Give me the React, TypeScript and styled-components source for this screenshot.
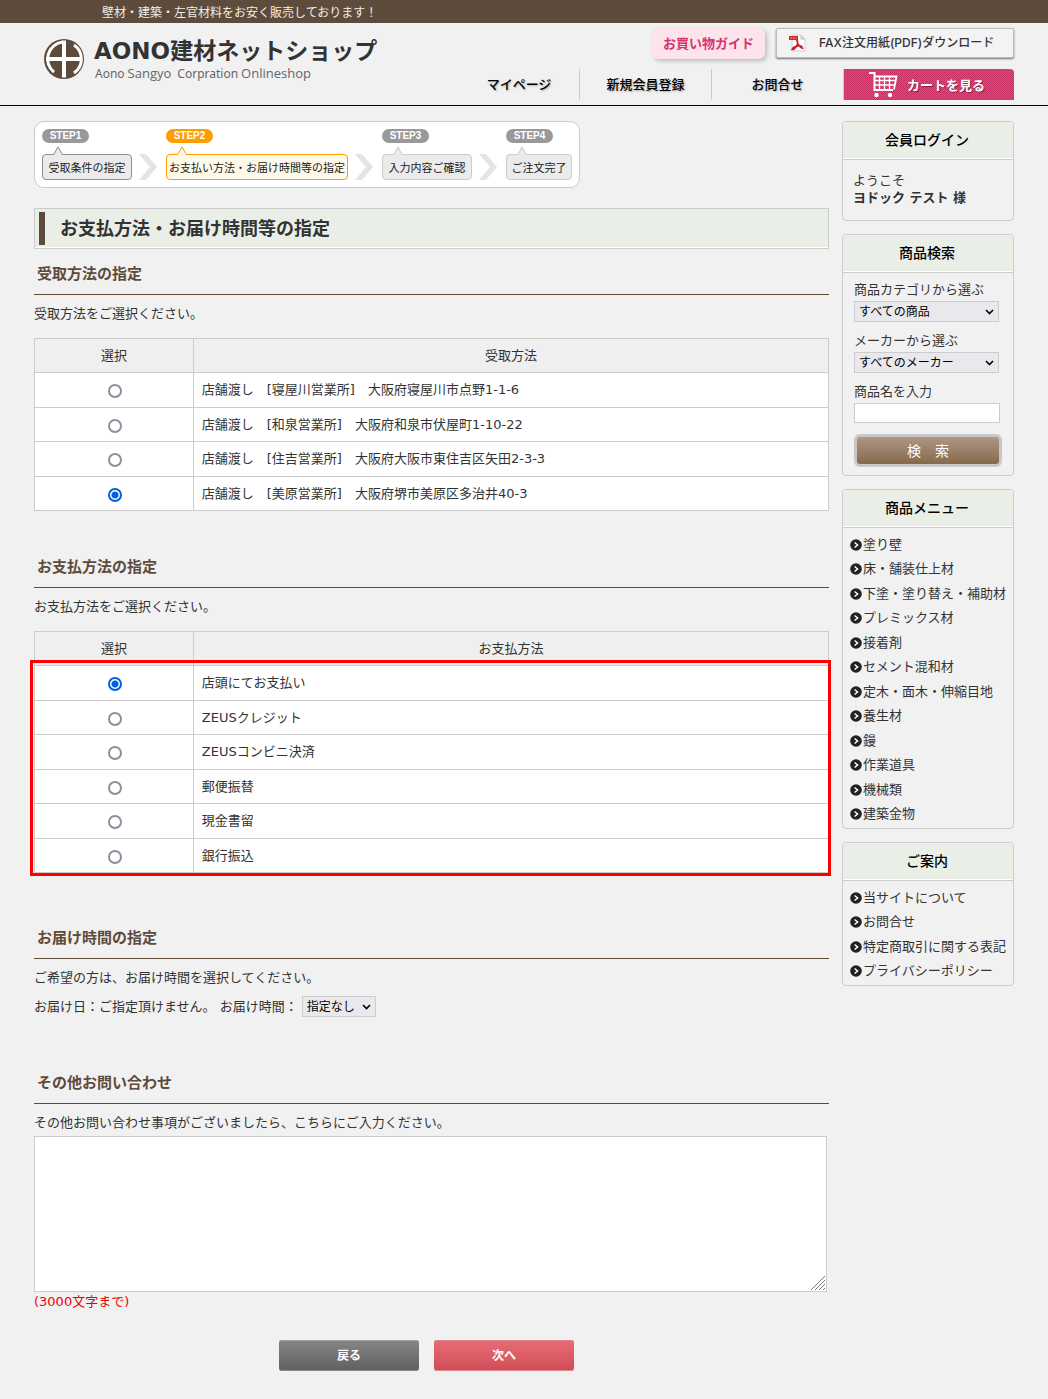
import React, { useState } from "react";
import styled, { createGlobalStyle, css } from "styled-components";

const jp = `"DejaVu Sans", "Noto Sans CJK JP", sans-serif`;
const jpSans = `"Noto Sans CJK JP", "Liberation Sans", sans-serif`;
const brown = "#5d4b3c";
const line = "#cccccc";

const GlobalStyle = createGlobalStyle`
  * { box-sizing: border-box; }
  body { margin: 0; background: #f1f1f1; color: #333333; font: 13px/20px ${jp}; }
  h1, h2, h3, p, ul { margin: 0; padding: 0; }
  ul { list-style: none; }
  a { color: inherit; text-decoration: none; }
  button, input, select, textarea { font-family: ${jpSans}; margin: 0; }
`;

const Container = styled.div`
  max-width: 980px;
  margin: 0 auto;
`;

/* ---------- header ---------- */

const TopBar = styled.div`
  background: ${brown};
  color: #f3ede0;
`;

const Tagline = styled.p`
  padding-left: 68px;
  font: 12px/23px ${jpSans};
`;

const Header = styled.header`
  border-bottom: 1px solid #000000;
`;

const HeaderInner = styled(Container)`
  display: flex;
  justify-content: space-between;
  padding: 5px 0;
`;

const Brand = styled.a`
  display: flex;
  align-items: flex-start;
  gap: 10px;
  padding: 11px 0 0 10px;
`;

const BrandText = styled.span`
  display: flex;
  flex-direction: column;
`;

const BrandName = styled.span`
  font: bold 23px/24px "DejaVu Sans", "Noto Sans CJK JP", sans-serif;
  color: #333333;
  white-space: nowrap;
`;

const BrandSub = styled.span`
  display: flex;
  align-items: baseline;
  gap: 3px;
  margin-left: 1px;
  font: 12px/20px "Noto Sans", "Open Sans", sans-serif;
  color: #666666;
`;

const Larger = styled.span`
  font-size: 13px;
  font-weight: 400;
  font-family: "Open Sans", "Noto Sans", sans-serif;
  margin-right: 3px;
`;

const HeaderSide = styled.div`
  display: flex;
  flex-direction: column;
  align-items: flex-end;
  gap: 10px;
`;

const Shortcuts = styled.div`
  display: flex;
  gap: 11px;
`;

const GuideLink = styled.a`
  width: 113px;
  height: 31px;
  border-radius: 6px;
  background: #fde4ec;
  box-shadow: 2px 2px 4px rgba(0, 0, 0, 0.22);
  color: #d6336c;
  font: bold 13px/30px ${jpSans};
  text-align: center;
`;

const FaxLink = styled.a`
  display: flex;
  align-items: center;
  gap: 12px;
  width: 238px;
  height: 30px;
  padding-left: 12px;
  border: 1px solid #bdbdbd;
  border-radius: 2px;
  background: #f3f3f3;
  box-shadow: 0 1px 2px rgba(0, 0, 0, 0.55);
  font: 500 12px/30px Inter, "Noto Sans CJK JP", sans-serif;
  white-space: nowrap;
`;

const Nav = styled.nav`
  display: flex;
`;

const NavLink = styled.a<{ $width: number }>`
  width: ${(p) => p.$width}px;
  border-right: 1px solid ${line};
  color: #000000;
  font: 500 13px/30px ${jpSans};
  text-align: center;
  text-shadow: 1px 1px 2px rgba(0, 0, 0, 0.3);
`;

const CartLink = styled.a`
  display: flex;
  align-items: center;
  justify-content: center;
  gap: 8px;
  width: 170px;
  height: 31px;
  padding-right: 4px;
  border-radius: 0 4px 0 0;
  background: repeating-conic-gradient(#c62e62 0% 25%, #cf5c5c 0% 50%) 0 0 / 2px 2px;
  color: #ffffff;
  font: bold 13px/31px ${jpSans};
  text-shadow: 1px 1px 1px rgba(60, 0, 20, 0.5);
`;

/* ---------- page frame ---------- */

const Page = styled(Container)`
  display: grid;
  grid-template-columns: minmax(0, 1fr) 172px;
  align-items: start;
  gap: 13px;
  padding: 15px 0 28px;
`;

const Side = styled.aside`
  display: flex;
  flex-direction: column;
  gap: 13px;
`;

/* ---------- steps ---------- */

const Steps = styled.ol`
  display: inline-flex;
  align-items: flex-end;
  margin: 0 0 20px;
  padding: 7px;
  list-style: none;
  vertical-align: top;
  background: #ffffff;
  border: 1px solid ${line};
  border-radius: 10px;
`;

type Tone = "done" | "active" | "todo";
const tones: Record<Tone, { edge: string; fill: string; pill: string }> = {
  done: { edge: "#8f8f8f", fill: "#ebebeb", pill: "#999999" },
  active: { edge: "#ff9c00", fill: "#fff9ea", pill: "#ff9c00" },
  todo: { edge: "#cccccc", fill: "#ebebeb", pill: "#999999" },
};

const StepItem = styled.li`
  display: flex;
  align-items: flex-end;
`;

const StepColumn = styled.div`
  display: flex;
  flex-direction: column;
  align-items: flex-start;
`;

const Pill = styled.span<{ $tone: Tone }>`
  width: 47px;
  border-radius: 7px;
  background: ${(p) => tones[p.$tone].pill};
  color: #ffffff;
  font: bold 10px/14px "Liberation Sans", sans-serif;
  text-align: center;
`;

const Pointer = styled.svg`
  display: block;
  position: relative;
  margin: 3px 0 -1px 11px;
`;

const StepBox = styled.span<{ $tone: Tone; $width: number }>`
  width: ${(p) => p.$width}px;
  border: 1px solid ${(p) => tones[p.$tone].edge};
  border-radius: 4px;
  background: ${(p) => tones[p.$tone].fill};
  font: 11px/24px ${jpSans};
  color: #222222;
  text-align: center;
  white-space: nowrap;
`;

const StepArrow = styled.svg`
  display: block;
  margin: 0 9px 0 7px;
`;

/* ---------- main column ---------- */

const PageTitle = styled.h1`
  display: flex;
  align-items: center;
  gap: 15px;
  height: 41px;
  padding-left: 4px;
  border: 1px solid ${line};
  background: #e9efe7;
  box-shadow: inset 0 -1px 0 #ffffff;
  font: bold 18px/33px ${jp};

  &::before {
    content: "";
    width: 6px;
    height: 33px;
    background: ${brown};
  }
`;

const Section = styled.section<{ $after: number }>`
  margin-bottom: ${(p) => p.$after}px;
`;

const SectionTitle = styled.h2`
  margin-bottom: 9px;
  padding: 15px 3px 10px;
  border-bottom: 1px solid ${brown};
  color: ${brown};
  font: bold 15px/20px ${jp};
`;

const TableFrame = styled.div`
  position: relative;
  margin-top: 14px;
`;

const Highlight = styled.div`
  position: absolute;
  top: 29px;
  right: -2px;
  bottom: -3px;
  left: -4px;
  border: 3px solid #ff0000;
  pointer-events: none;
`;

const ChoiceTable = styled.table`
  width: 100%;
  border-collapse: collapse;
  table-layout: fixed;
  line-height: 20px;

  th, td { border: 1px solid ${line}; padding: 0 8px; font-weight: normal; }
  th { background: #efefef; }
  th:first-child { width: 20%; }
  td { background: #ffffff; }
  td:first-child { text-align: center; }
  tr { height: 34px; }
  tbody tr:nth-child(odd) { height: 35px; }
`;

const Radio = styled.input`
  appearance: none;
  display: block;
  width: 14px;
  height: 14px;
  margin: 2px auto 0;
  border: 2px solid #8f8f9d;
  border-radius: 50%;
  background: #ffffff;
  transform: translateX(1px);

  &:checked {
    border-color: #0060df;
    background: radial-gradient(circle, #0060df 0 3px, #ffffff 4px);
  }
`;

const DeliveryRow = styled.div`
  display: flex;
  align-items: center;
  gap: 4px;
  margin-top: 8px;
`;

const SelectFrame = styled.span<{ $width: number }>`
  position: relative;
  display: block;
  width: ${(p) => p.$width}px;

  svg { position: absolute; top: 8px; right: 5px; pointer-events: none; }
`;

const SelectBox = styled.select`
  appearance: none;
  display: block;
  width: 100%;
  height: 21px;
  padding: 0 4px 1px;
  border: 1px solid ${line};
  border-radius: 0;
  background: #e9e9ed;
  color: #000000;
  font-size: 12px;
  line-height: 18px;
`;

const NoteFrame = styled.div`
  position: relative;
  margin: 3px 2px 0 0;

  svg { position: absolute; right: 2px; bottom: 2px; pointer-events: none; }
`;

const NoteArea = styled.textarea`
  display: block;
  width: 100%;
  height: 156px;
  border: 1px solid ${line};
  background: #ffffff;
  font-size: 13px;
  resize: none;
`;

const Limit = styled.p`
  color: #f00000;
`;

const Actions = styled.div`
  display: flex;
  justify-content: center;
  gap: 15px;
  padding-right: 10px;
`;

const ActionButton = styled.button<{ $primary?: boolean }>`
  width: 140px;
  height: 31px;
  padding: 0 0 2px;
  border: 0;
  border-radius: 3px;
  color: #ffffff;
  font-size: 12px;
  font-weight: bold;
  line-height: 28px;
  ${(p) =>
    p.$primary
      ? css`
          background: linear-gradient(#e86d76, #d04c57);
          box-shadow: inset 0 1px 0 #e3838b, inset 0 -1px 0 #de8a91;
        `
      : css`
          background: linear-gradient(#868686, #606060);
          box-shadow: inset 0 1px 0 #a0a0a0, inset 0 -1px 0 #8c8c8c;
        `}
`;

/* ---------- side column ---------- */

const Panel = styled.section`
  border: 1px solid ${line};
  border-radius: 4px;
  overflow: hidden;
`;

const PanelTitle = styled.h2`
  padding: 0 2px 3px 0;
  border-bottom: 1px solid ${line};
  background: #e9efe7;
  box-shadow: inset 0 -1px 0 #ffffff;
  color: #000000;
  font: 500 14px/34px ${jpSans};
  text-align: center;
`;

const Greeting = styled.p`
  padding: 12px 10px 14px;
  line-height: 17px;
`;

const SearchForm = styled.form`
  display: flex;
  flex-direction: column;
  gap: 9px;
  padding: 7px 11px 8px;
`;

const Field = styled.div`
  label { display: block; margin-bottom: 1px; }
`;

const TextBox = styled.input`
  display: block;
  width: 146px;
  height: 20px;
  border: 1px solid ${line};
  background: #ffffff;
`;

const SearchButton = styled.button`
  width: 148px;
  height: 33px;
  margin-top: 2px;
  padding: 0 0 2px;
  border: 3px solid #c8c8c8;
  border-radius: 6px;
  background: linear-gradient(#ad9784, #86694c);
  color: #ffffff;
  font-size: 14px;
  line-height: 24px;
`;

const MenuList = styled.ul`
  padding: 5px 6px 1px 7px;
`;

const MenuItem = styled.li`
  line-height: 24px;
  &:nth-child(even) { padding-bottom: 1px; }

  a { display: flex; align-items: center; gap: 1px; white-space: nowrap; }
`;

/* ---------- drawings ---------- */

const LogoMark = () => (
  <svg width="40" height="40" viewBox="0 0 40 40" aria-hidden="true">
    <circle cx="20" cy="20" r="20" fill={brown} />
    <path d="M10 33.200A17 17 0 0 1 19 3M30 6A17 17 0 0 1 30 34" fill="none" stroke="#ffffff" strokeWidth="3" />
    <path d="M20 1.500v37M2 20h36" stroke="#ffffff" strokeWidth="4" />
  </svg>
);

const PdfIcon = () => (
  <svg width="18" height="18" viewBox="0 0 18 18" aria-hidden="true">
    <path d="M3 1h9l4 4v12H3z" fill="#ffffff" stroke="#cfcfcf" />
    <path d="M12 1v4h4" fill="#dddddd" stroke="#bbbbbb" />
    <rect x="0" y="2" width="9" height="4" fill="#d0282c" />
    <path d="M1.500 4h6" stroke="#f3b9b9" strokeDasharray="1.500 1" />
    <path d="M7.500 6c1.500 5 4 8 7 8.500M8.500 6.500C9.500 11 6 15.500 3 15.500c1-3 6-4.500 10.500-3" fill="none" stroke="#cc1f22" strokeWidth="1.600" />
  </svg>
);

const CartIcon = () => (
  <svg width="30" height="27" viewBox="0 0 30 27" fill="none" stroke="#ffffff" aria-hidden="true">
    <path d="M0 2h5.500v17H24" strokeWidth="2" />
    <path d="M5.500 5.500h22L25 18.500" strokeWidth="1.800" />
    <path d="M6 9.500h20.500M6 14h20M10.500 6v12M15.500 6v12M20.500 6v12" strokeWidth="1.300" />
    <circle cx="7.500" cy="24" r="2.200" fill="#ffffff" stroke="none" />
    <circle cx="21" cy="24" r="2.200" fill="#ffffff" stroke="none" />
  </svg>
);

const Bullet = () => (
  <svg width="12" height="12" viewBox="0 0 12 12" aria-hidden="true">
    <circle cx="6" cy="6" r="5.800" fill="#222222" />
    <path d="M4.600 3.500L7.600 6l-3 2.500" fill="none" stroke="#ffffff" strokeWidth="1.500" />
  </svg>
);

const Chevron = () => (
  <svg width="9" height="6" viewBox="0 0 9 6" aria-hidden="true">
    <path d="M1 1l3.500 3.500L8 1" fill="none" stroke="#000000" strokeWidth="1.600" />
  </svg>
);

const Grip = () => (
  <svg width="14" height="14" viewBox="0 0 14 14" aria-hidden="true">
    <path d="M0 14L14 0M4 14L14 4M8 14l6-6M12 14l2-2" stroke="#777777" />
  </svg>
);

/* ---------- parts ---------- */

function Select({ id, width, option, label }: { id: string; width: number; option: string; label?: string }) {
  return (
    <SelectFrame $width={width}>
      <SelectBox id={id} aria-label={label}>
        <option>{option}</option>
      </SelectBox>
      <Chevron />
    </SelectFrame>
  );
}

function Choices({ name, heading, items, initial, marked }: { name: string; heading: string; items: string[]; initial: number; marked?: boolean }) {
  const [chosen, setChosen] = useState(initial);
  return (
    <TableFrame>
      <ChoiceTable>
        <thead>
          <tr>
            <th scope="col">選択</th>
            <th scope="col">{heading}</th>
          </tr>
        </thead>
        <tbody>
          {items.map((item, i) => (
            <tr key={item}>
              <td>
                <Radio type="radio" id={`${name}-${i}`} name={name} checked={chosen === i} onChange={() => setChosen(i)} />
              </td>
              <td>
                <label htmlFor={`${name}-${i}`}>{item}</label>
              </td>
            </tr>
          ))}
        </tbody>
      </ChoiceTable>
      {marked && <Highlight />}
    </TableFrame>
  );
}

function Menu({ title, items }: { title: string; items: string[] }) {
  return (
    <Panel>
      <PanelTitle>{title}</PanelTitle>
      <MenuList>
        {items.map((item) => (
          <MenuItem key={item}>
            <a href="#">
              <Bullet />
              {item}
            </a>
          </MenuItem>
        ))}
      </MenuList>
    </Panel>
  );
}

const steps: { text: string; tone: Tone; width: number }[] = [
  { text: "受取条件の指定", tone: "done", width: 90 },
  { text: "お支払い方法・お届け時間等の指定", tone: "active", width: 182 },
  { text: "入力内容ご確認", tone: "todo", width: 90 },
  { text: "ご注文完了", tone: "todo", width: 66 },
];

const shops = [
  "店舗渡し\u3000[寝屋川営業所]\u3000大阪府寝屋川市点野1-1-6",
  "店舗渡し\u3000[和泉営業所]\u3000大阪府和泉市伏屋町1-10-22",
  "店舗渡し\u3000[住吉営業所]\u3000大阪府大阪市東住吉区矢田2-3-3",
  "店舗渡し\u3000[美原営業所]\u3000大阪府堺市美原区多治井40-3",
];

const payments = ["店頭にてお支払い", "ZEUSクレジット", "ZEUSコンビニ決済", "郵便振替", "現金書留", "銀行振込"];

const products = ["塗り壁", "床・舗装仕上材", "下塗・塗り替え・補助材", "プレミックス材", "接着剤", "セメント混和材", "定木・面木・伸縮目地", "養生材", "鏝", "作業道具", "機械類", "建築金物"];

const guides = ["当サイトについて", "お問合せ", "特定商取引に関する表記", "プライバシーポリシー"];

export default function App() {
  return (
    <>
      <GlobalStyle />
      <TopBar>
        <Container>
          <Tagline>{"壁材・建築・左官材料をお安く販売しております\uff01"}</Tagline>
        </Container>
      </TopBar>
      <Header>
        <HeaderInner>
          <Brand href="#">
            <LogoMark />
            <BrandText>
              <BrandName>AONO建材ネットショップ</BrandName>
              <BrandSub>
                <span>Aono</span>
                <Larger>Sangyo</Larger>
                <span>Corpration</span>
                <Larger>Onlineshop</Larger>
              </BrandSub>
            </BrandText>
          </Brand>
          <HeaderSide>
            <Shortcuts>
              <GuideLink href="#">お買い物ガイド</GuideLink>
              <FaxLink href="#">
                <PdfIcon />
                FAX注文用紙(PDF)ダウンロード
              </FaxLink>
            </Shortcuts>
            <Nav>
              <NavLink href="#" $width={121}>マイページ</NavLink>
              <NavLink href="#" $width={132}>新規会員登録</NavLink>
              <NavLink href="#" $width={132}>お問合せ</NavLink>
              <CartLink href="#">
                <CartIcon />
                カートを見る
              </CartLink>
            </Nav>
          </HeaderSide>
        </HeaderInner>
      </Header>

      <Page>
        <main>
          <Steps>
            {steps.map((step, i) => (
              <StepItem key={step.text}>
                <StepColumn>
                  <Pill $tone={step.tone}>STEP{i + 1}</Pill>
                  <Pointer width="10" height="9" viewBox="0 0 10 9" aria-hidden="true">
                    <path d="M0.500 9L5 0.800 9.500 9" fill={tones[step.tone].fill} stroke={tones[step.tone].edge} />
                  </Pointer>
                  <StepBox $tone={step.tone} $width={step.width}>{step.text}</StepBox>
                </StepColumn>
                {i < steps.length - 1 && (
                  <StepArrow width="18" height="26" viewBox="0 0 18 26" aria-hidden="true">
                    <path d="M0 0h7l11 13L7 26H0l11-13z" fill="#e4e4e4" />
                  </StepArrow>
                )}
              </StepItem>
            ))}
          </Steps>

          <PageTitle>お支払方法・お届け時間等の指定</PageTitle>

          <Section $after={31}>
            <SectionTitle>受取方法の指定</SectionTitle>
            <p>受取方法をご選択ください。</p>
            <Choices name="pickup" heading="受取方法" items={shops} initial={3} />
          </Section>

          <Section $after={40}>
            <SectionTitle>お支払方法の指定</SectionTitle>
            <p>お支払方法をご選択ください。</p>
            <Choices name="payment" heading="お支払方法" items={payments} initial={0} marked />
          </Section>

          <Section $after={41}>
            <SectionTitle>お届け時間の指定</SectionTitle>
            <p>ご希望の方は、お届け時間を選択してください。</p>
            <DeliveryRow>
              <span>{"お届け日\uff1aご指定頂けません。"}</span>
              <label htmlFor="time">{"お届け時間\uff1a"}</label>
              <Select id="time" width={74} option="指定なし" />
            </DeliveryRow>
          </Section>

          <Section $after={28}>
            <SectionTitle>その他お問い合わせ</SectionTitle>
            <label htmlFor="note">その他お問い合わせ事項がございましたら、こちらにご入力ください。</label>
            <NoteFrame>
              <NoteArea id="note" />
              <Grip />
            </NoteFrame>
            <Limit>(3000文字まで)</Limit>
          </Section>

          <Actions>
            <ActionButton type="button">戻る</ActionButton>
            <ActionButton type="button" $primary>次へ</ActionButton>
          </Actions>
        </main>

        <Side>
          <Panel>
            <PanelTitle>会員ログイン</PanelTitle>
            <Greeting>
              ようこそ
              <br />
              <b>ヨドック テスト 様</b>
            </Greeting>
          </Panel>

          <Panel>
            <PanelTitle>商品検索</PanelTitle>
            <SearchForm onSubmit={(e) => e.preventDefault()}>
              <Field>
                <label htmlFor="category">商品カテゴリから選ぶ</label>
                <Select id="category" width={145} option="すべての商品" />
              </Field>
              <Field>
                <label htmlFor="maker">メーカーから選ぶ</label>
                <Select id="maker" width={145} option="すべてのメーカー" />
              </Field>
              <Field>
                <label htmlFor="keyword">商品名を入力</label>
                <TextBox id="keyword" type="text" />
              </Field>
              <SearchButton type="submit">{"検\u3000索"}</SearchButton>
            </SearchForm>
          </Panel>

          <Menu title="商品メニュー" items={products} />
          <Menu title="ご案内" items={guides} />
        </Side>
      </Page>
    </>
  );
}
